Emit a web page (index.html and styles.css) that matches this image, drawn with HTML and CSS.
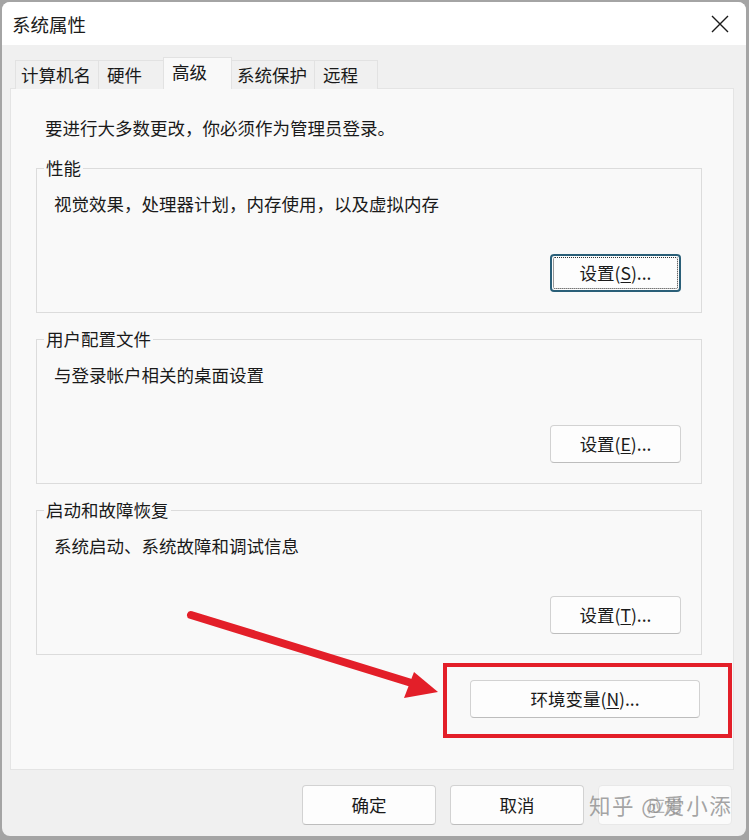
FILE: index.html
```html
<!DOCTYPE html>
<html lang="zh-CN">
<head>
<meta charset="utf-8">
<title>系统属性</title>
<link rel="stylesheet" href="styles.css">
</head>
<body>
<div class="window">
  <div class="titlebar">
    <span class="title">系统属性</span>
    <svg class="close" width="18" height="18" viewBox="0 0 18 18"><path d="M1 1 L17 17 M17 1 L1 17" stroke="#1a1a1a" stroke-width="1.4" fill="none"/></svg>
  </div>
  <div class="main">
    <div class="tabs">
      <div class="tab tab-name">计算机名</div>
      <div class="tab tab-hw">硬件</div>
      <div class="tab tab-active">高级</div>
      <div class="tab tab-prot">系统保护</div>
      <div class="tab tab-remote">远程</div>
    </div>
    <div class="pane">
      <p class="intro">要进行大多数更改，你必须作为管理员登录。</p>
      <div class="group">
        <span class="legend">性能</span>
        <p class="desc">视觉效果，处理器计划，内存使用，以及虚拟内存</p>
        <button class="btn btn-set btn-focus">设置(<u>S</u>)...</button>
      </div>
      <div class="group">
        <span class="legend">用户配置文件</span>
        <p class="desc">与登录帐户相关的桌面设置</p>
        <button class="btn btn-set">设置(<u>E</u>)...</button>
      </div>
      <div class="group">
        <span class="legend">启动和故障恢复</span>
        <p class="desc">系统启动、系统故障和调试信息</p>
        <button class="btn btn-set">设置(<u>T</u>)...</button>
      </div>
      <button class="btn btn-env">环境变量(<u>N</u>)...</button>
    </div>
    <div class="footer">
      <button class="btn btn-foot">确定</button>
      <button class="btn btn-foot">取消</button>
      <button class="btn btn-foot btn-disabled">应用</button>
    </div>
  </div>
  <div class="redbox"></div>
</div>
<svg class="arrow" width="749" height="840" viewBox="0 0 749 840">
  <line x1="191" y1="615" x2="418" y2="685" stroke="#e31f29" stroke-width="8" stroke-linecap="round"/>
  <polygon points="438,692 414,672 404,698" fill="#e31f29"/>
</svg>
<div class="watermark">知乎 @爱小添</div>
</body>
</html>
```
FILE: styles.css
```css
* { box-sizing: border-box; }
html, body { margin: 0; padding: 0; }
body {
  width: 749px;
  height: 840px;
  overflow: hidden;
  background: #a4a4a4;
  position: relative;
  font-family: "Noto Sans CJK SC", "Noto Sans", sans-serif;
  color: #1a1a1a;
  font-size: 17.5px;
}
.window {
  position: relative;
  margin: 2px 0 0 2px;
  width: 744px;
  height: 834px;
  border-radius: 8px;
  background: #f0f0f0;
  overflow: hidden;
  display: flex;
  flex-direction: column;
}
.titlebar {
  height: 43px;
  background: #ffffff;
  display: flex;
  align-items: center;
  padding-left: 10px;
  flex: none;
}
.title { font-size: 18.5px; line-height: 24px; }
.close { margin-left: auto; margin-right: 17px; }
.main {
  display: flex;
  flex-direction: column;
  padding: 12px 12px 0 8px;
}
.tabs {
  display: flex;
  align-items: flex-end;
  margin-left: 5px;
  height: 32px;
  margin-bottom: -1px;
  position: relative;
  z-index: 1;
}
.tab {
  height: 29px;
  padding: 0 0 0 5px;
  line-height: 28px;
  background: #f0f0f0;
  border-top: 1px solid #e2e2e2;
  border-left: 1px solid #e2e2e2;
  white-space: nowrap;
}
.tab-name { width: 83px; }
.tab-hw { width: 65px; padding-left: 8px; }
.tab-active {
  height: 32px;
  width: 69px;
  padding-left: 8px;
  background: #f9f9f9;
  border-right: 1px solid #e2e2e2;
  line-height: 28px;
}
.tab-prot { width: 82px; border-left: none; }
.tab-remote { width: 64px; padding-left: 8px; border-right: 1px solid #e2e2e2; }
.pane {
  height: 682px;
  background: #f9f9f9;
  border: 1px solid #e4e4e4;
  padding: 27px 0 0 0;
  display: flex;
  flex-direction: column;
}
.intro {
  margin: 0 0 0 34px;
  line-height: 24px;
}
.group {
  margin: 26px 0 0 25px;
  width: 666px;
  height: 145px;
  border: 1px solid #dcdcdc;
  display: flex;
  flex-direction: column;
  align-items: flex-start;
}
.group:first-of-type { margin-top: 28px; }
.legend {
  margin: -12px 0 0 7px;
  padding: 0 2px;
  line-height: 22px;
  background: #f9f9f9;
}
.desc {
  margin: 14px 0 0 17px;
  line-height: 22px;
}
.btn {
  font-family: "Noto Sans CJK SC", "Noto Sans", sans-serif;
  font-size: 17.5px;
  color: #1a1a1a;
  background: #fdfdfd;
  border: 1px solid #d2d2d2;
  border-bottom-color: #bdbdbd;
  border-radius: 4px;
  padding: 0;
  line-height: 24px;
  position: relative;
}
.btn u { text-underline-offset: 2px; }
.btn-set {
  width: 131px;
  height: 38px;
  margin: auto 20px 20px 0;
  align-self: flex-end;
}
.btn-focus {
  border: 2px solid #2a5f78;
  border-radius: 4px;
}
.btn-focus::after {
  content: "";
  position: absolute;
  inset: 1px;
  border: 1px dotted #333;
  border-radius: 2px;
}
.btn-env {
  width: 230px;
  height: 38px;
  margin: 25px 33px 0 0;
  align-self: flex-end;
}
.footer {
  display: flex;
  justify-content: flex-end;
  gap: 14px;
  margin-top: 15px;
  padding-right: 2px;
}
.btn-foot { width: 134px; height: 40px; }
.btn-disabled { color: #b4b4b4; background: #fbfbfb; border-color: #e8e8e8; }
.redbox {
  position: absolute;
  left: 441px;
  top: 661px;
  width: 289px;
  height: 75px;
  border: 4px solid #e31f29;
}
.arrow {
  position: absolute;
  left: 0;
  top: 0;
  pointer-events: none;
}
.watermark {
  position: absolute;
  left: 589px;
  top: 790px;
  font-size: 21.5px;
  line-height: 30px;
  letter-spacing: 1.5px;
  color: rgba(135, 135, 135, 0.75);
  white-space: nowrap;
}
```
